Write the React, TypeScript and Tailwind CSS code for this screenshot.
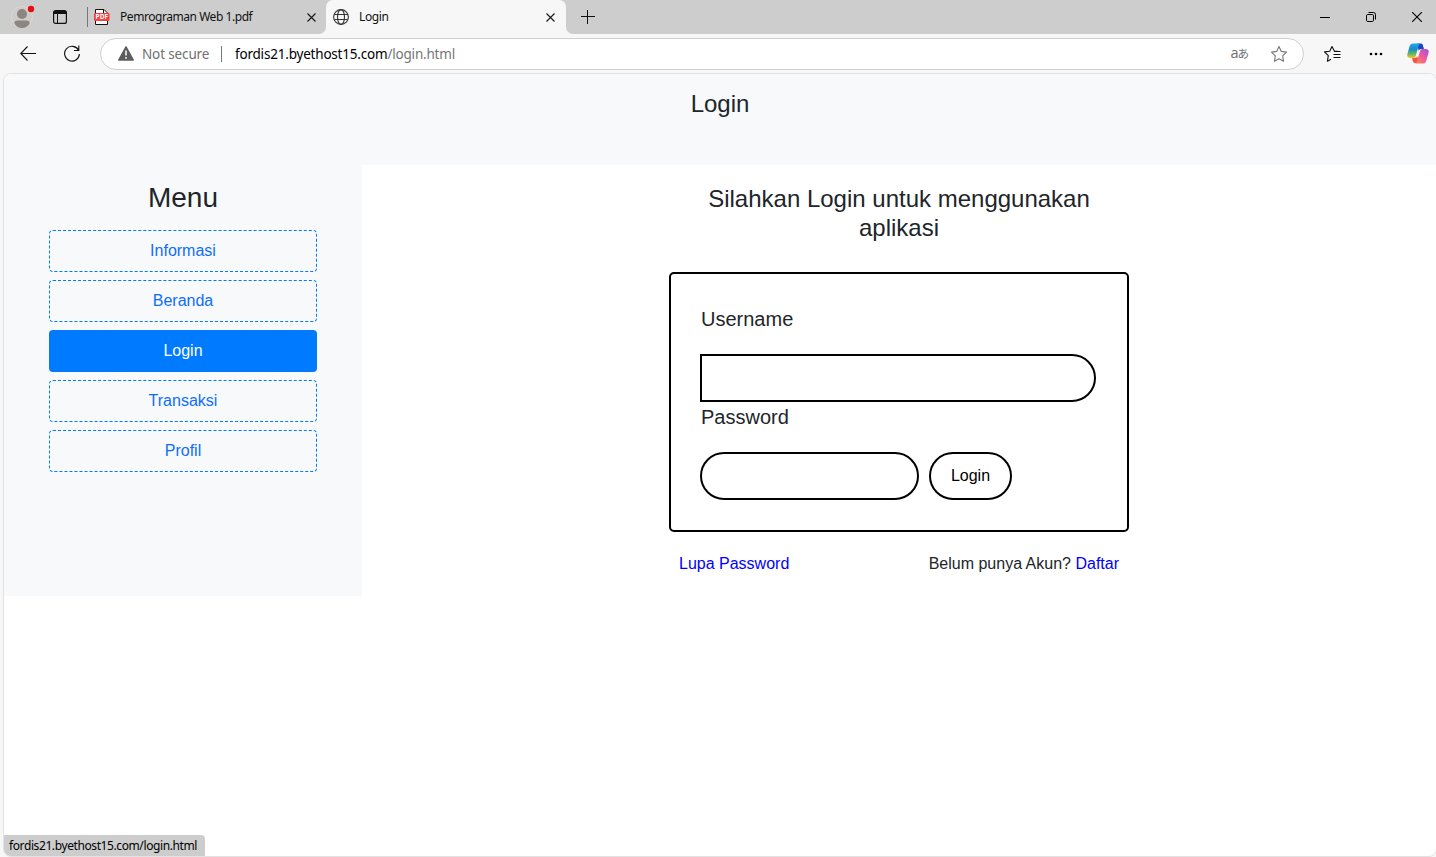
import React from "react";

const menu = ["Informasi", "Beranda", "Login", "Transaksi", "Profil"];

function Close() {
  return (
    <svg width="9" height="9" viewBox="0 0 9 9" fill="none" stroke="#1b1b1b" strokeWidth="1.2">
      <path d="M.5 .5l8 8M8.500 .5l-8 8" />
    </svg>
  );
}

function Avatar() {
  return (
    <svg className="ml-[11px] shrink-0" width="25" height="28" viewBox="0 0 25 28">
      <circle cx="11" cy="14" r="10.500" fill="#cfcbc8" stroke="#dad7d4" />
      <circle cx="11" cy="11" r="5" fill="#8b8682" />
      <path d="M3.300 20.300c0-2 1.200-2.800 3-2.800h9.400c1.800 0 3 .8 3 2.800-1.500 3-4.200 4.700-7.700 4.700s-6.200-1.700-7.700-4.700z" fill="#8b8682" />
      <circle cx="20" cy="6" r="3.200" fill="#e80f0f" />
    </svg>
  );
}

function TabStrip() {
  return (
    <div className="flex h-[34px] items-stretch bg-[#cdcdcd]">
      <div className="flex w-[88px] items-center">
        <Avatar />
        <svg className="ml-[17px] shrink-0" width="14" height="14" viewBox="0 0 14 14" fill="none" stroke="#111">
          <rect x=".6" y=".6" width="12.800" height="12.800" rx="2" strokeWidth="1.200" />
          <path d="M1 1h12v3H1z" fill="#111" stroke="none" />
          <path d="M4.500 3v10" strokeWidth="1" />
        </svg>
        <div className="ml-auto h-5 w-px bg-[#777]" />
      </div>
      <div className="flex flex-1 bg-linear-to-b from-[#cdcdcd] from-50% to-[#f7f7f7] to-50%">
        <div className="flex w-[238px] items-center rounded-br-[7px] bg-[#cdcdcd] pl-[5px] pr-[10px]">
          <svg width="18" height="18" viewBox="0 0 18 18" className="shrink-0">
            <path d="M2.500 1.500h8.500l3.500 3.500v11.500H2.500z" fill="#fff" stroke="#111" />
            <path d="M10.500 1.500V5.500H15" fill="none" stroke="#111" />
            <rect x="1" y="5" width="15.500" height="8" rx="1" fill="#f5403f" />
            <text x="8.800" y="11.400" textAnchor="middle" fontSize="6.500" fontWeight="700" fill="#fff" fontFamily="Open Sans, sans-serif">PDF</text>
          </svg>
          <span className="ml-[9px] whitespace-nowrap text-[12px] tracking-[-0.45px] text-[#111]">Pemrograman Web 1.pdf</span>
          <span className="ml-auto"><Close /></span>
        </div>
        <div className="flex w-[240px] items-center rounded-t-[7px] bg-[#f7f7f7] pl-[7px] pr-[11px]">
          <svg width="16" height="16" viewBox="0 0 16 16" fill="none" stroke="#333" strokeWidth="1.100">
            <circle cx="8" cy="8" r="7.400" />
            <ellipse cx="8" cy="8" rx="3.500" ry="7.400" />
            <path d="M1.300 5.500h13.400M1.300 10.500h13.400" />
          </svg>
          <span className="ml-[10px] text-[12px] tracking-[-0.4px] text-[#111]">Login</span>
          <span className="ml-auto"><Close /></span>
        </div>
        <div className="flex flex-1 items-center rounded-bl-[7px] bg-[#cdcdcd] pl-[15px]">
          <svg width="14" height="14" viewBox="0 0 14 14" stroke="#111" strokeWidth="1"><path d="M6.500 0v14M0 6.500h14" /></svg>
          <svg className="ml-auto" width="10" height="10" viewBox="0 0 10 10" stroke="#000"><path d="M0 5.500h10" /></svg>
          <svg className="ml-[36px]" width="10" height="10" viewBox="0 0 10 10" fill="none" stroke="#000">
            <rect x=".5" y="2.500" width="7" height="7" rx="1.300" />
            <path d="M2.500 .5h5q2 0 2 2v5" />
          </svg>
          <svg className="ml-[36px] mr-[14px]" width="10" height="10" viewBox="0 0 10 10" stroke="#000" strokeWidth="1.100"><path d="M0 0l10 10M10 0L0 10" /></svg>
        </div>
      </div>
    </div>
  );
}

function Copilot() {
  return (
    <svg className="ml-[24px] shrink-0" width="22" height="21" viewBox="0 0 24 22" preserveAspectRatio="none">
      <defs>
        <linearGradient id="cool" x1="0" y1="0" x2="0" y2="1">
          <stop offset="0" stopColor="#20a9ee" />
          <stop offset=".4" stopColor="#168ccc" />
          <stop offset=".7" stopColor="#5cb66b" />
          <stop offset="1" stopColor="#f2c918" />
        </linearGradient>
        <linearGradient id="warm" x1="1" y1="0" x2="0" y2="1">
          <stop offset="0" stopColor="#a34bea" />
          <stop offset=".5" stopColor="#ef5b9c" />
          <stop offset="1" stopColor="#ff8a45" />
        </linearGradient>
      </defs>
      <path d="M11 .5h4.300c1.200 0 1.700.8 2 1.800l1.200 4h-3c-1.500 0-2.300.8-2.700 2z" fill="#1749bd" />
      <path d="M13 21H8.500c-1.200 0-1.700-.8-2-1.800L5.500 15.500h3c1.500 0 2.300-.8 2.700-2z" fill="#f2543d" />
      <path d="M6.500.5h8.500c-1.200 0-1.800.8-2.200 2L9.500 13.500c-.5 1.500-1.300 2.200-2.700 2.200H3.500c-2.500 0-3.800-1.500-3.100-4L2.800 3.500C3.400 1.500 4.700.5 6.500.5z" fill="url(#cool)" />
      <path d="M17.200 21.500h-8.500c1.200 0 1.800-.8 2.200-2L14.200 8.400c.5-1.500 1.300-2.200 2.700-2.200h3.600c2.500 0 3.700 1.500 3 4L21 18.500c-.6 2-2 3-3.800 3z" fill="url(#warm)" />
    </svg>
  );
}

function Toolbar() {
  return (
    <div className="flex h-[39px] items-center bg-[#f7f7f7]">
      <svg className="ml-5 shrink-0" width="16" height="16" viewBox="0 0 16 16" fill="none" stroke="#111" strokeWidth="1.100"><path d="M16 7.500H.7M7.500 .5L.7 7.500l6.800 7" /></svg>
      <svg className="ml-7 shrink-0" width="16" height="17" viewBox="0 0 16 17" fill="none" stroke="#111" strokeWidth="1.100"><path d="M14.600 5.300A7.400 7.400 0 1 0 15.400 9M14.800 .5v5H10" /></svg>
      <div className="ml-5 flex h-8 w-[1204px] items-center rounded-full border border-[#d0d0d0] bg-white pl-[17px] text-[13.5px]">
        <svg width="16" height="15" viewBox="0 0 16 15" className="shrink-0">
          <path d="M8 0.800L15.300 14H.7z" fill="#5c5c5c" stroke="#5c5c5c" strokeWidth="1.400" strokeLinejoin="round" />
          <path d="M8 4.500v5M8 11v1.700" stroke="#fff" strokeWidth="1.500" />
        </svg>
        <span className="ml-2 w-[79px] whitespace-nowrap pt-0.5 tracking-[-0.14px] text-[#707070]">Not secure</span>
        <div className="h-4 w-px bg-[#777]" />
        <span className="ml-[13px] whitespace-nowrap pt-0.5 tracking-[-0.2px] text-black">fordis21.byethost15.com<span className="text-[#767676]">/login.html</span></span>
        <span className="ml-auto flex items-baseline text-[#707070]"><span className="font-['Open_Sans',sans-serif] text-[14.5px] leading-none">a</span><span className="-ml-px font-['Noto_Sans_CJK_JP',sans-serif] text-[11.5px] leading-none">あ</span></span>
        <svg className="ml-[21px] mr-[15px]" width="18" height="18" viewBox="0 0 18 18" fill="none" stroke="#777" strokeWidth="1.100" strokeLinejoin="round"><path d="M9 1.500l2.300 4.900 5.200.7-3.800 3.700.9 5.500L9 13.700l-4.600 2.600.9-5.500-3.800-3.700 5.200-.7z" /></svg>
      </div>
      <svg className="ml-[19px] shrink-0" width="18" height="18" viewBox="0 0 18 18" fill="none" stroke="#111" strokeWidth="1.100" strokeLinejoin="round">
        <path d="M16 6.500l-4.700-.4L9 1.500 6.700 6.200l-5.200.7 3.800 3.800-.9 5.500L8 14.200" />
        <path d="M11 6.500h6.500M10.500 9.500h7M10.500 12.500h7" />
      </svg>
      <svg className="ml-[28px] shrink-0" width="14" height="4" viewBox="0 0 14 4"><circle cx="2" cy="2" r="1.300" /><circle cx="7" cy="2" r="1.300" /><circle cx="12" cy="2" r="1.300" /></svg>
      <Copilot />
    </div>
  );
}

export default function App() {
  return (
    <div className="flex h-[857px] w-[1436px] flex-col overflow-hidden bg-[#f7f7f7] font-['Noto_Sans','Open_Sans',sans-serif]">
      <TabStrip />
      <Toolbar />
      <div className="relative -mr-px ml-[3px] flex h-[784px] flex-col overflow-hidden rounded-[8px] border border-[#e2e2e2] bg-white font-['Liberation_Sans',Arial,sans-serif] text-[#212529]">
        <header className="h-[91px] shrink-0 bg-[#f8f9fb] pt-[15px] text-center text-[24px] leading-[29px]">Login</header>
        <div className="flex h-[431px]">
          <aside className="w-[358px] shrink-0 bg-[#f8f9fb] px-[45px] pt-4">
            <h2 className="text-center text-[28px] leading-[34px]">Menu</h2>
            <nav className="mt-[15px] flex w-[268px] flex-col gap-2">
              {menu.map((m) => (
                <a key={m} href="#" className={m === "Login"
                  ? "flex h-[42px] items-center justify-center rounded-[4px] bg-[#007bff] text-[16px] text-white"
                  : "flex h-[42px] items-center justify-center rounded-[4px] border border-dashed border-[#007bff] text-[16px] text-[#0d6efd]"}>
                  {m}
                </a>
              ))}
            </nav>
          </aside>
          <main className="flex flex-1 flex-col items-center pt-[19px]">
            <h3 className="w-[440px] text-center text-[24px] leading-[29px]">Silahkan Login untuk menggunakan aplikasi</h3>
            <form className="mt-[30px] h-[260px] w-[460px] rounded-[5px] border-2 border-black pl-[29px] pt-[30px]">
              <label className="ml-px block text-[20px] leading-[30px]">Username</label>
              <input className="mt-5 block h-12 w-[396px] rounded-r-full border-2 border-black px-4 outline-none" />
              <label className="ml-px block text-[20px] leading-[30px]">Password</label>
              <div className="mt-5 flex gap-[10px]">
                <input type="password" className="h-12 w-[219px] rounded-full border-2 border-black px-4 outline-none" />
                <button type="button" className="h-12 w-[83px] rounded-full border-2 border-black text-[16px] text-black">Login</button>
              </div>
            </form>
            <div className="mt-5 flex w-[440px] justify-between text-[16px] leading-6">
              <a href="#" className="text-[#0000ff]">Lupa Password</a>
              <span>Belum punya Akun? <a href="#" className="text-[#0000ff]">Daftar</a></span>
            </div>
          </main>
        </div>
        <div className="absolute bottom-0 left-0 flex h-[21px] w-[201px] items-center whitespace-nowrap rounded-tr-[4px] bg-[#cdcdcd] pl-[5px] pt-px font-['Noto_Sans','Open_Sans',sans-serif] text-[12px] tracking-[-0.4px] text-black">fordis21.byethost15.com/login.html</div>
      </div>
    </div>
  );
}
